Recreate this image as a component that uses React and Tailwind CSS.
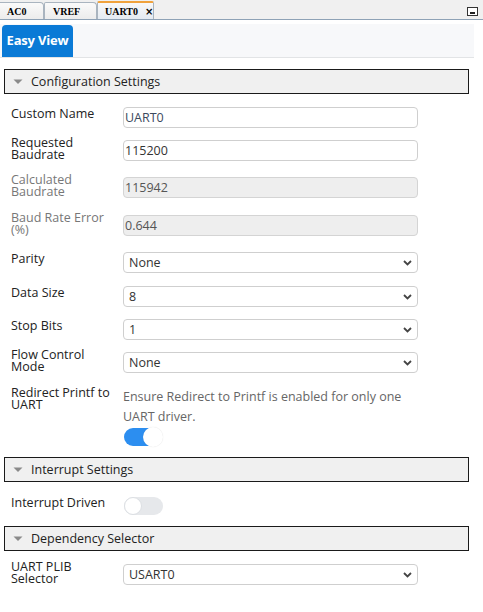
import React from "react";

const F = { fontFamily: '"Open Sans", "Noto Sans", sans-serif' };
const TF = { fontFamily: '"Liberation Serif", "DejaVu Serif", serif' };

function Chevron() {
  return (
    <svg width="9" height="6" viewBox="0 0 9 6" className="absolute right-[5px] top-[7px]">
      <path d="M1 1 L4.5 4.5 L8 1" fill="none" stroke="#444" strokeWidth="1.8" />
    </svg>
  );
}

function Header({ title }) {
  return (
    <div className="mx-[4px] w-[465px] h-[25px] border border-[#1a1a1a] bg-[#f0f0f0] flex items-center shrink-0">
      <svg width="10" height="6" viewBox="0 0 10 6" className="ml-[8px] mt-[1px]">
        <path d="M0.5 0.5 L9.5 0.5 L5 5 Z" fill="#8a8a8a" />
      </svg>
      <span className="ml-[8px] text-[12.5px] text-[#222] leading-[16px]">{title}</span>
    </div>
  );
}

function Label({ children, two, disabled }) {
  return (
    <div
      className={`w-[112px] shrink-0 text-[12.5px] ${two ? "leading-[12px] -mt-[3px]" : "leading-[16px] -mt-[1px]"} ${disabled ? "text-[#777]" : "text-[#222]"}`}
    >
      {children}
    </div>
  );
}

function TextBox({ value, disabled, color }) {
  return (
    <div
      className={`w-[295px] h-[21px] rounded-[4px] border ${disabled ? "border-[#d4d4d4] bg-[#eeeeee] text-[#555]" : "border-[#cfcfcf] bg-white"} text-[12.5px] leading-[19px] pl-[1px]`}
      style={color ? { color } : undefined}
    >
      {value}
    </div>
  );
}

function SelectBox({ value }) {
  return (
    <div className="relative w-[295px] h-[21px] rounded-[4px] border border-[#cfcfcf] bg-white text-[12.5px] leading-[19px] pl-[5px] text-[#333]">
      {value}
      <Chevron />
    </div>
  );
}

function Row({ h, children }) {
  return <div className={`flex items-start pl-[11px] shrink-0 ${h}`}>{children}</div>;
}

export default function App() {
  return (
    <div className="w-[483px] h-[612px] bg-white overflow-hidden flex flex-col" style={F}>
      {/* tab bar */}
      <div className="relative h-[20px] bg-[#f0f0f0] border-b border-[#8ea2b6] flex items-end shrink-0">
        <div className="h-[17px] w-[44px] border-t border-r border-[#a9b4bf] rounded-tr-[4px] bg-gradient-to-b from-[#fafafa] to-[#ececec] flex items-center pl-[7px] text-[10px] font-bold text-black" style={TF}>
          AC0
        </div>
        <div className="h-[17px] w-[53px] border-t border-r border-l border-[#a9b4bf] rounded-tr-[4px] rounded-tl-[2px] bg-gradient-to-b from-[#fafafa] to-[#ececec] flex items-center pl-[8px] text-[10px] font-bold text-black" style={TF}>
          VREF
        </div>
        <div className="h-[18px] w-[57px] border-t-2 border-t-[#f0a23c] border-l border-r border-[#a9b4bf] rounded-t-[2px] bg-gradient-to-b from-[#f8f8f8] to-[#e4ebf2] flex items-center pl-[7px] text-[10px] font-bold text-black" style={TF}>
          <span>UART0</span>
          <span className="ml-[7px] text-[10px] font-bold" style={{ fontFamily: '"DejaVu Sans", sans-serif' }}>×</span>
        </div>
        <div className="absolute right-[5px] top-[7px] w-[11px] h-[9px] border border-[#333] bg-white flex items-end justify-center pb-[1px]">
          <div className="w-[5px] h-[2px] bg-[#222]" />
        </div>
      </div>

      {/* easy view strip */}
      <div className="mt-[4px] w-[474px] h-[34px] bg-[#f7f8fa] border-b border-[#e2e4e6] shrink-0 flex items-start">
        <div className="ml-[2px] mt-[1px] h-[32px] w-[71px] rounded-t-[4px] bg-[#0a7ad6] text-white font-bold text-[13px] flex items-center justify-center tracking-[-0.2px]">
          Easy View
        </div>
      </div>

      <div className="h-[11px] shrink-0" />
      <Header title="Configuration Settings" />
      <div className="h-[13px] shrink-0" />

      <Row h="h-[33px]">
        <Label>Custom Name</Label>
        <TextBox value="UART0" color="#3b4a5e" />
      </Row>
      <Row h="h-[37px]">
        <Label two>Requested<br />Baudrate</Label>
        <TextBox value="115200" color="#333" />
      </Row>
      <Row h="h-[38px]">
        <Label two disabled>Calculated<br />Baudrate</Label>
        <TextBox value="115942" disabled />
      </Row>
      <Row h="h-[37px]">
        <Label two disabled>Baud Rate Error<br />(%)</Label>
        <TextBox value="0.644" disabled />
      </Row>
      <Row h="h-[34px]">
        <Label>Parity</Label>
        <SelectBox value="None" />
      </Row>
      <Row h="h-[33px]">
        <Label>Data Size</Label>
        <SelectBox value="8" />
      </Row>
      <Row h="h-[33px]">
        <Label>Stop Bits</Label>
        <SelectBox value="1" />
      </Row>
      <Row h="h-[35px]">
        <Label two>Flow Control<br />Mode</Label>
        <SelectBox value="None" />
      </Row>
      <Row h="h-[70px]">
        <div className="w-[112px] shrink-0 text-[12.5px] leading-[12px] text-[#222]">
          Redirect Printf to<br />UART
        </div>
        <div className="flex flex-col">
          <div className="text-[12.5px] leading-[20px] text-[#666] w-[300px]">
            Ensure Redirect to Printf is enabled for only one<br />UART driver.
          </div>
          <div className="mt-[1px] ml-[1px] relative w-[36px] h-[18px] rounded-full bg-[#2c8ef0]">
            <div className="absolute -right-[3px] -top-[1px] w-[20px] h-[20px] rounded-full bg-white shadow-[0_0_1px_rgba(0,0,0,0.15)]" />
          </div>
        </div>
      </Row>

      <Header title="Interrupt Settings" />
      <div className="flex items-start pl-[11px] h-[44px] shrink-0">
        <div className="w-[112px] shrink-0 text-[12.5px] leading-[16px] text-[#222] mt-[13px]">Interrupt Driven</div>
        <div className="mt-[15px] ml-[1px] relative w-[39px] h-[18px] rounded-full bg-[#e6e8eb]">
          <div className="absolute left-0 top-0 w-[18px] h-[18px] rounded-full bg-white border border-[#dcdfe3]" />
        </div>
      </div>

      <Header title="Dependency Selector" />
      <div className="h-[13px] shrink-0" />
      <Row h="h-[33px]">
        <Label two>UART PLIB<br />Selector</Label>
        <SelectBox value="USART0" />
      </Row>
    </div>
  );
}
